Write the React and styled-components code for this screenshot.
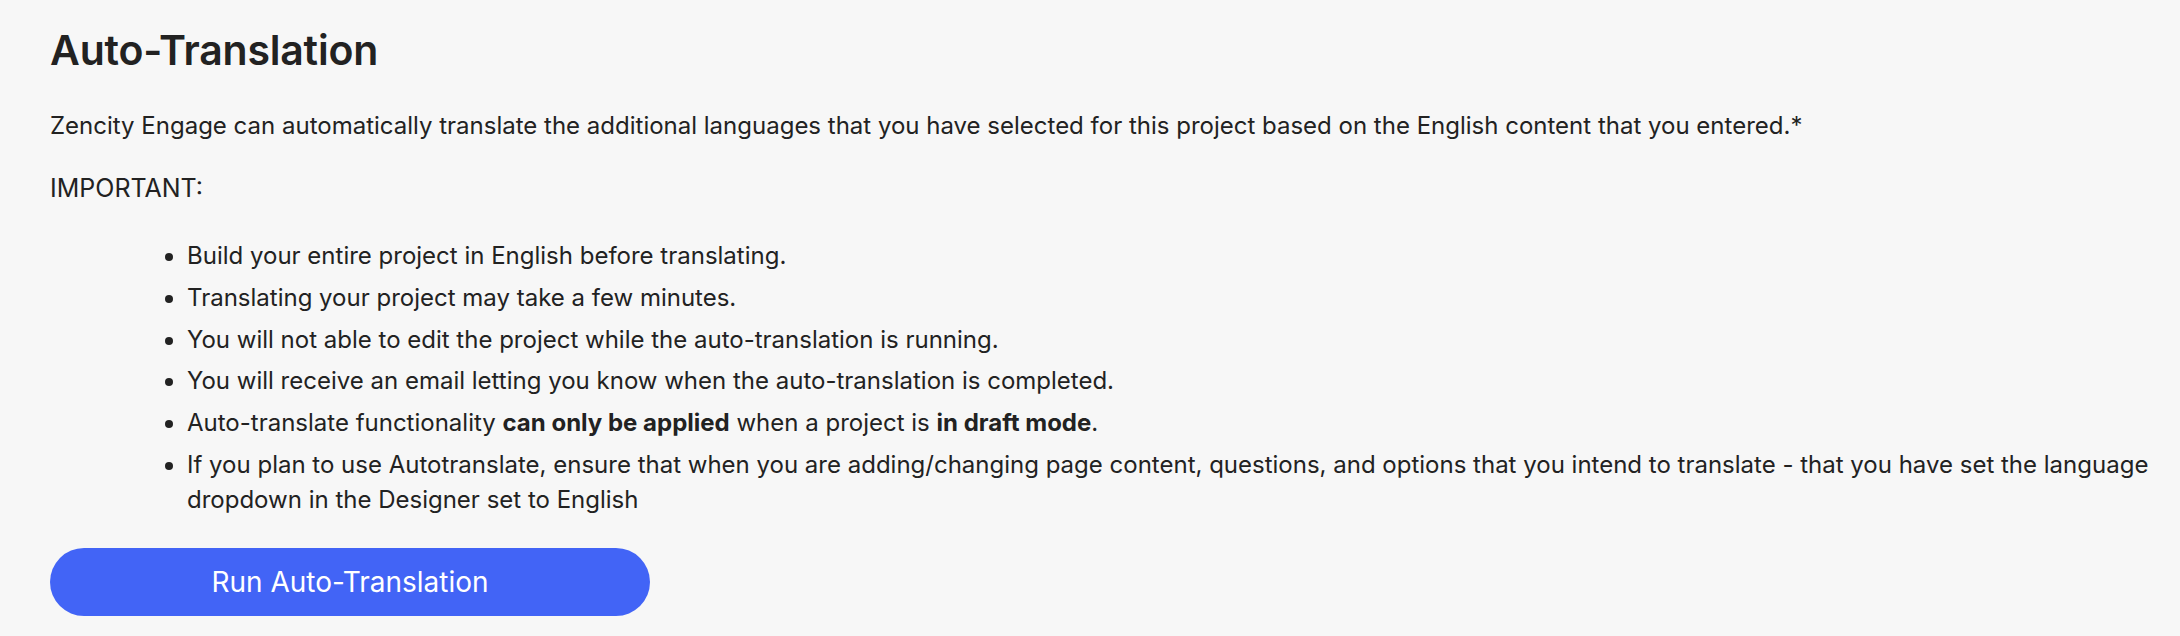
import styled, { createGlobalStyle } from "styled-components";

const Global = createGlobalStyle`
    html, body {
        margin: 0;
        padding: 0;
        background: #f7f7f7;
    }

    body {
        font-family: Inter, "Noto Sans", sans-serif;
        color: #222222;
    }
`;

const Section = styled.section`
    display: flex;
    flex-direction: column;
    align-items: flex-start;

    min-height: 636px;
    padding: 24px 16px 0 50px;
    box-sizing: border-box;

    h2 {
        margin: 0;
        font-size: 41px;
        font-weight: 600;
        line-height: 52px;
        letter-spacing: -0.2px;
    }

    .intro {
        margin: 34px 0 0;
        font-size: 24px;
        line-height: 32px;
    }

    .important {
        margin: 30px 0 0;
        font-size: 25px;
        line-height: 32px;
    }
`;

const Bullets = styled.ul`
    margin: 35px 0 0;
    padding: 0 0 0 137px;
    font-size: 24px;
    line-height: 34.8px;

    li + li {
        margin-top: 7px;
    }

    strong {
        font-weight: 700;
    }
`;

const RunButton = styled.button`
    margin-top: 30px;
    width: 600px;
    height: 68px;
    border: 0;
    border-radius: 34px;
    background-color: #4264f6;
    color: #ffffff;
    font-family: inherit;
    font-size: 28px;
    cursor: pointer;
`;

const App = () => {
    return (
        <>
            <Global />
            <Section>
                <h2>Auto-Translation</h2>
                <p className="intro">
                    Zencity Engage can automatically translate the additional languages that you have selected for this
                    project based on the English content that you entered.*
                </p>
                <p className="important">IMPORTANT:</p>
                <Bullets>
                    <li>Build your entire project in English before translating.</li>
                    <li>Translating your project may take a few minutes.</li>
                    <li>You will not able to edit the project while the auto-translation is running.</li>
                    <li>You will receive an email letting you know when the auto-translation is completed.</li>
                    <li>
                        Auto-translate functionality <strong>can only be applied</strong> when a project is{" "}
                        <strong>in draft mode</strong>.
                    </li>
                    <li>
                        If you plan to use Autotranslate, ensure that when you are adding/changing page content,
                        questions, and options that you intend to translate - that you have set the language dropdown in
                        the Designer set to English
                    </li>
                </Bullets>
                <RunButton>Run Auto-Translation</RunButton>
            </Section>
        </>
    );
};

export default App;
